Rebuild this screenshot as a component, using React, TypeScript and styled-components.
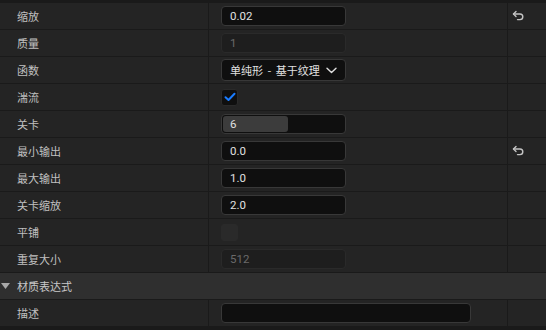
import React from "react";
import styled, { createGlobalStyle } from "styled-components";

const Global = createGlobalStyle`
  html, body { margin: 0; padding: 0; background: #1a1a1a; }
  body { font-family: Roboto, "Noto Sans CJK SC", sans-serif; }
`;

const Panel = styled.div`
  width: 546px;
  height: 330px;
  background: #1a1a1a;
  padding-top: 3px;
  box-sizing: border-box;
  display: flex;
  flex-direction: column;
  overflow: hidden;
`;

const Row = styled.div`
  display: flex;
  height: 26px;
  background: #242424;
  border-bottom: 1px solid #1a1a1a;
  flex-shrink: 0;
`;

const NameCell = styled.div`
  width: 209px;
  border-right: 1px solid #1a1a1a;
  display: flex;
  align-items: center;
  padding-left: 17px;
  box-sizing: border-box;
  font-family: "Noto Sans CJK SC", sans-serif;
  font-size: 11px;
  color: #c0c0c0;
`;

const ValueCell = styled.div`
  width: 299px;
  border-right: 1px solid #1a1a1a;
  display: flex;
  align-items: center;
  padding-left: 12px;
  box-sizing: border-box;
`;

const ResetCell = styled.div`
  flex: 1;
  display: flex;
  align-items: center;
  padding-left: 4px;
  color: #c4c4c4;
`;

const Input = styled.div<{ $disabled?: boolean; $wide?: boolean }>`
  position: relative;
  width: ${(p) => (p.$wide ? "250px" : "125px")};
  height: 20px;
  box-sizing: border-box;
  border-radius: 4px;
  border: 1px solid ${(p) => (p.$disabled ? "#2a2a2a" : "#383838")};
  background: ${(p) => (p.$disabled ? "#1e1e1e" : "#0f0f0f")};
  display: flex;
  align-items: center;
  padding-left: 8px;
  font-family: Roboto, sans-serif;
  font-size: 11.5px;
  color: ${(p) => (p.$disabled ? "#6a6a6a" : "#e0e0e0")};
  overflow: hidden;
`;

const SliderFill = styled.div`
  position: absolute;
  left: 1px;
  top: 1px;
  bottom: 1px;
  border-radius: 3px;
  background: #3c3c3c;
`;

const SliderText = styled.span`
  position: relative;
`;

const Dropdown = styled.div`
  width: 125px;
  height: 22px;
  box-sizing: border-box;
  border-radius: 4px;
  border: 1px solid #383838;
  background: #0f0f0f;
  display: flex;
  align-items: center;
  padding-left: 8px;
  gap: 6px;
  font-family: "Noto Sans CJK SC", sans-serif;
  font-size: 11px;
  word-spacing: 2px;
  white-space: nowrap;
  color: #e0e0e0;
`;

const Check = styled.div<{ $checked?: boolean }>`
  width: 17px;
  height: 17px;
  box-sizing: border-box;
  border-radius: 3px;
  border: 1px solid #2a2a2a;
  background: ${(p) => (p.$checked ? "#0f0f0f" : "#2a2a2a")};
  display: flex;
  align-items: center;
  justify-content: center;
`;

const Header = styled.div`
  display: flex;
  align-items: center;
  height: 26px;
  background: #2f2f2f;
  border-bottom: 1px solid #1a1a1a;
  flex-shrink: 0;
  font-family: "Noto Sans CJK SC", sans-serif;
  font-size: 11px;
  color: #c8c8c8;
`;

const Caret = styled.svg`
  width: 9px;
  height: 6px;
  margin-left: 1px;
  margin-right: 7px;
`;

const ResetIcon = () => (
  <svg width="13" height="12" viewBox="0 0 13 12" fill="none" stroke="#c4c4c4" strokeWidth="1.4" strokeLinecap="round" strokeLinejoin="round">
    <path d="M4 1.5 1.5 4 4 6.5" />
    <path d="M1.5 4h6.5a2.8 2.8 0 0 1 0 5.6H5.5" />
  </svg>
);

const Chevron = () => (
  <svg width="11" height="7" viewBox="0 0 11 7" fill="none" stroke="#e0e0e0" strokeWidth="1.4" strokeLinecap="round" strokeLinejoin="round">
    <path d="M1 1.2l4.5 4.3L10 1.2" />
  </svg>
);

const CheckMark = () => (
  <svg width="12" height="10" viewBox="0 0 12 10" fill="none" stroke="#1a7cff" strokeWidth="2" strokeLinecap="round" strokeLinejoin="round">
    <path d="M1.5 5.2 4.5 8 10.5 1.8" />
  </svg>
);

type Prop = {
  name: string;
  value: React.ReactNode;
  reset?: boolean;
};

const PropRow = ({ name, value, reset }: Prop) => (
  <Row>
    <NameCell>{name}</NameCell>
    <ValueCell>{value}</ValueCell>
    <ResetCell>{reset && <ResetIcon />}</ResetCell>
  </Row>
);

export default function App() {
  return (
    <>
      <Global />
      <Panel>
        <PropRow name="缩放" value={<Input>0.02</Input>} reset />
        <PropRow name="质量" value={<Input $disabled>1</Input>} />
        <PropRow
          name="函数"
          value={
            <Dropdown>
              单纯形 - 基于纹理
              <Chevron />
            </Dropdown>
          }
        />
        <PropRow
          name="湍流"
          value={
            <Check $checked>
              <CheckMark />
            </Check>
          }
        />
        <PropRow
          name="关卡"
          value={
            <Input>
              <SliderFill style={{ width: "65px" }} />
              <SliderText>6</SliderText>
            </Input>
          }
        />
        <PropRow name="最小输出" value={<Input>0.0</Input>} reset />
        <PropRow name="最大输出" value={<Input>1.0</Input>} />
        <PropRow name="关卡缩放" value={<Input>2.0</Input>} />
        <PropRow name="平铺" value={<Check />} />
        <PropRow name="重复大小" value={<Input $disabled>512</Input>} />
        <Header>
          <Caret viewBox="0 0 9 6">
            <path d="M0 0h9L4.5 6z" fill="#a8a8a8" />
          </Caret>
          材质表达式
        </Header>
        <PropRow name="描述" value={<Input $wide />} />
      </Panel>
    </>
  );
}
